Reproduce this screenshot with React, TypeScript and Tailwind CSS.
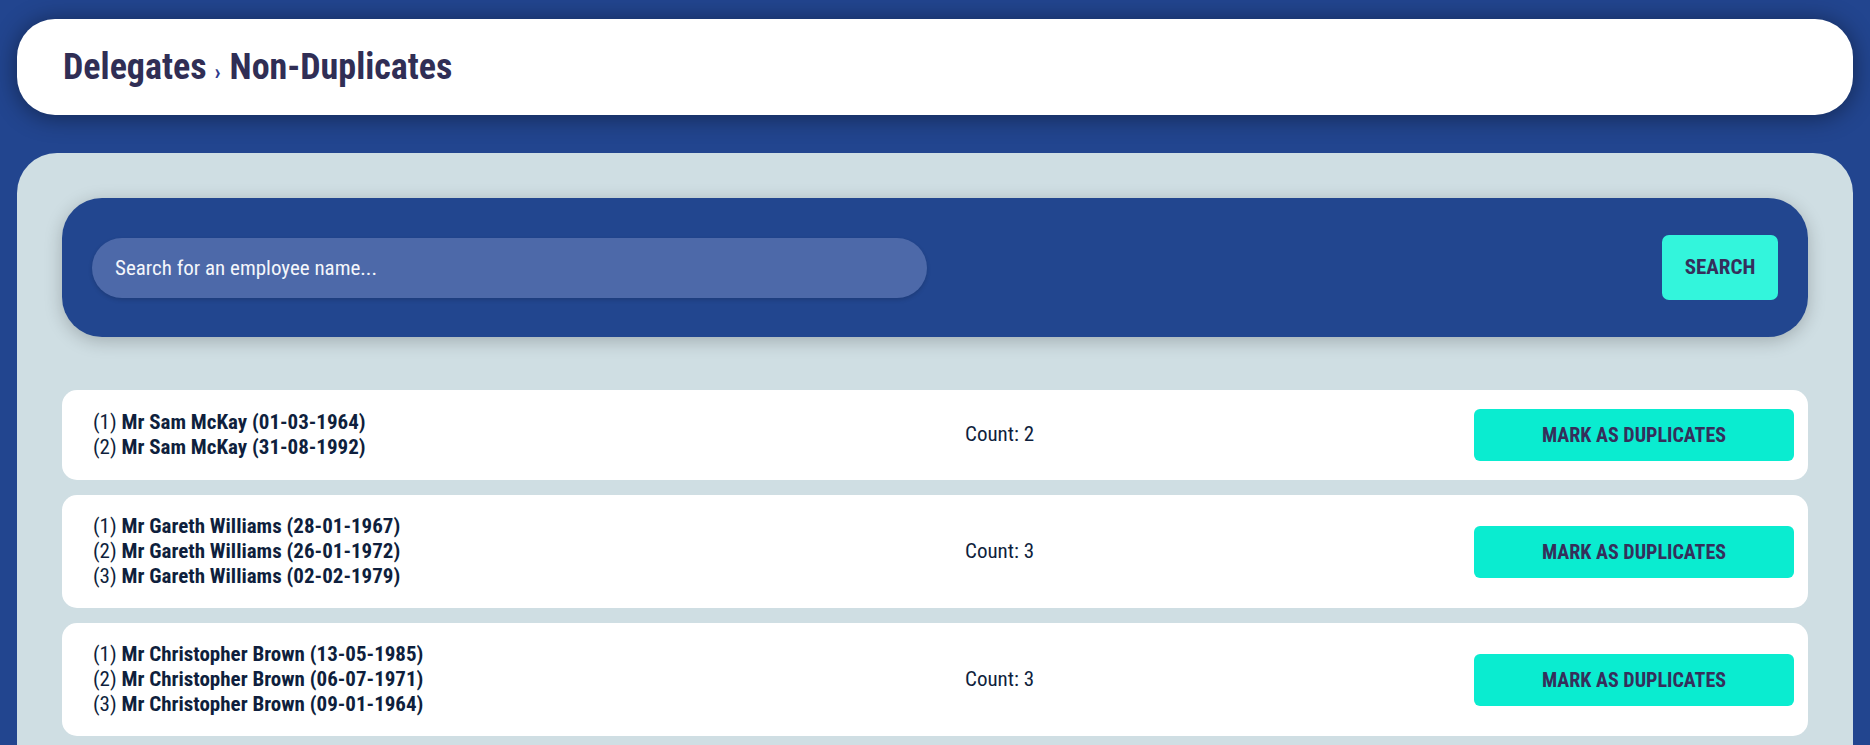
const groups = [
  {
    count: 2,
    people: ['Mr Sam McKay (01-03-1964)', 'Mr Sam McKay (31-08-1992)'],
  },
  {
    count: 3,
    people: [
      'Mr Gareth Williams (28-01-1967)',
      'Mr Gareth Williams (26-01-1972)',
      'Mr Gareth Williams (02-02-1979)',
    ],
  },
  {
    count: 3,
    people: [
      'Mr Christopher Brown (13-05-1985)',
      'Mr Christopher Brown (06-07-1971)',
      'Mr Christopher Brown (09-01-1964)',
    ],
  },
  {
    count: 2,
    people: ['Mr David Jones (11-11-1980)', 'Mr David Jones (04-02-1975)'],
  },
];

export default function App() {
  return (
    <div className="min-h-screen bg-[#22458f] px-[17px] pt-[19px] font-['Roboto_Condensed',Roboto,sans-serif] font-stretch-condensed">
      {/* Page header */}
      <header className="flex h-[96px] items-center rounded-[38px] bg-white pl-[46px] shadow-[0_2px_24px_rgba(0,0,0,0.45)]">
        <h1 className="flex items-baseline text-[36px] font-bold leading-none text-[#302e55]">
          <span>Delegates</span>
          <span className="ml-[8px] mr-[9px] text-[22px] text-[#2d3a8c]">›</span>
          <span>Non-Duplicates</span>
        </h1>
      </header>

      <main className="mt-[38px] rounded-[40px] bg-[#cfdee3] px-[45px] pb-[40px] pt-[45px]">
        {/* Search */}
        <div className="flex h-[139px] items-center justify-between rounded-[40px] bg-[#22468f] px-[30px] shadow-[0_4px_18px_rgba(0,0,0,0.22)]">
          <input
            type="text"
            placeholder="Search for an employee name..."
            className="h-[60px] w-[835px] rounded-full bg-[#4d69a9] px-[23px] text-[21px] text-white shadow-[0_2px_4px_rgba(0,0,0,0.15)] outline-none placeholder:text-[#f4f6fb]"
          />
          <button className="h-[65px] w-[116px] rounded-[7px] bg-[#33f5dc] text-[21px] font-bold text-[#352f5b]">
            SEARCH
          </button>
        </div>

        {/* Result rows */}
        <div className="mt-[53px] flex flex-col gap-[15px]">
          {groups.map((group, i) => (
            <div
              key={i}
              className="flex items-center rounded-[15px] bg-white py-[19px] pl-[31px] pr-[14px]"
            >
              <div className="w-[872px] text-[21px] leading-[25px] text-[#0f1f3d]">
                {group.people.map((p, j) => (
                  <div key={j}>
                    ({j + 1}) <span className="font-bold">{p}</span>
                  </div>
                ))}
              </div>
              <div className="flex-1 text-[21px] text-[#0f1f3d]">Count: {group.count}</div>
              <button className="h-[52px] w-[320px] rounded-[6px] bg-[#0aecd0] text-[20px] font-bold text-[#352f5b]">
                MARK AS DUPLICATES
              </button>
            </div>
          ))}
        </div>
      </main>
    </div>
  );
}
